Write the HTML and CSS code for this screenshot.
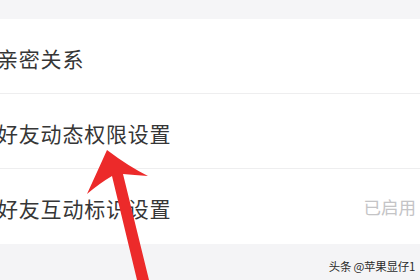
FILE: index.html
```html
<!DOCTYPE html>
<html lang="zh">
<head>
<meta charset="utf-8">
<link rel="stylesheet" href="styles.css">
</head>
<body>
<div class="screen">
  <div class="band-top"></div>
  <div class="list">
    <div class="row"><span class="label">亲密关系</span></div>
    <div class="row"><span class="label">好友动态权限设置</span></div>
    <div class="row"><span class="label">好友互动标识设置</span><span class="value">已启用</span></div>
  </div>
  <div class="band-bottom">
    <span class="watermark">头条 @苹果显仔1</span>
  </div>
  <svg class="arrow" width="420" height="280" viewBox="0 0 420 280">
    <path d="M107 150 Q128 166 148 176 Q134 175 123 174 L149 280 L137 280 L112 176 Q100 183 87 194 Q98 170 107 150 Z" fill="#ec2a2a"/>
  </svg>
</div>
</body>
</html>
```

FILE: styles.css
```css
* { box-sizing: border-box; }
html, body { margin: 0; padding: 0; }
body {
  width: 420px;
  height: 280px;
  overflow: hidden;
  background: #f4f4f6;
  font-family: "Noto Sans CJK SC", "Noto Sans", sans-serif;
}
.screen {
  position: relative;
  width: 420px;
  height: 280px;
  display: flex;
  flex-direction: column;
}
.band-top {
  height: 19px;
  background: #f5f5f7;
}
.list {
  background: #ffffff;
  display: flex;
  flex-direction: column;
}
.row {
  height: 75px;
  display: flex;
  align-items: center;
  justify-content: space-between;
  border-bottom: 1px solid #eeeeef;
  padding-right: 4px;
  padding-top: 3px;
}
.row:last-child { border-bottom: none; }
.label {
  margin-left: -3px;
  font-size: 21px;
  color: #363636;
  letter-spacing: 0.8px;
}
.value {
  font-size: 17.5px;
  color: #c4c4c6;
  margin-top: -4px;
}
.band-bottom {
  flex: 1;
  background: #f4f4f6;
  display: flex;
  justify-content: flex-end;
  align-items: flex-end;
  padding: 0 5px 6px 0;
}
.watermark {
  font-size: 11.5px;
  color: #2a2a2a;
  letter-spacing: -0.3px;
  text-shadow: 0 0 2px #ffffff;
}
.arrow {
  position: absolute;
  left: 0;
  top: 0;
}
```
